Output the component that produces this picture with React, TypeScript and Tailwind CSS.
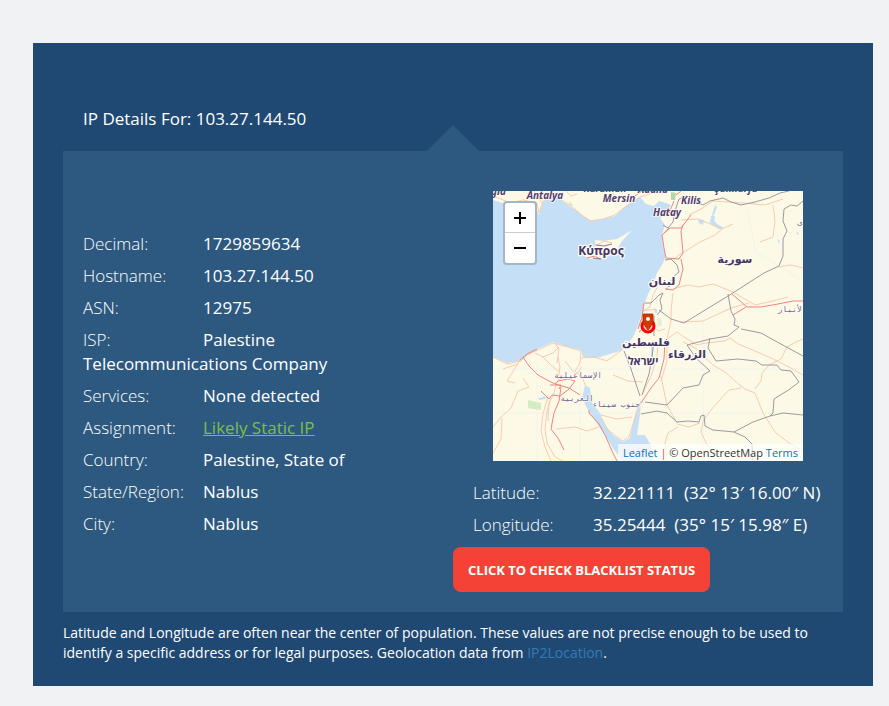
import React from "react";

const details = [
  { label: "Decimal:", value: "1729859634" },
  { label: "Hostname:", value: "103.27.144.50" },
  { label: "ASN:", value: "12975" },
  { label: "ISP:", value: "Palestine Telecommunications Company" },
  { label: "Services:", value: "None detected" },
  { label: "Assignment:", value: "Likely Static IP", href: "#static-ip" },
  { label: "Country:", value: "Palestine, State of" },
  { label: "State/Region:", value: "Nablus" },
  { label: "City:", value: "Nablus" },
];

const coordinates = [
  { label: "Latitude:", value: "32.221111\u00a0 (32° 13′ 16.00″ N)" },
  { label: "Longitude:", value: "35.25444\u00a0 (35° 15′ 15.98″ E)" },
];

const minorRoads = [
  "M0 5L8 8L17 12L30 9L44 12L46 22L50 10L57 7L65 7L77 14L90 25L98 30L110 28L122 24L135 14L147 6L160 2",
  "M73 0L78 5L84 3M118 0L124 8M41 0L45 6L49 12M60 0L56 5",
  "M92 63L100 66L110 60L120 58M104 54L111 50L119 52",
  "M188 29L205 28L215 32L229 38L240 33M229 38L222 44L205 52L196 58L186 64L180 69",
  "M196 24L208 18L220 10L250 12L272 14L290 8M280 14L282 30L280 46L267 51",
  "M180 98L195 94L206 96L220 93L240 101L262 114L280 110L295 106M286 76L298 74L310 77",
  "M188 131L210 130L238 117L256 112M180 102L178 120L178 130L174 148",
  "M147 135L150 120L157 116L160 104L165 95M150 120L163 118M154 130L165 140L172 138",
  "M34 164L47 158L60 152L75 156L88 160L87 172L82 180L90 188L92 194",
  "M34 164L28 170L14 173L0 166M42 162L50 166L58 174L66 181M50 166L60 162L66 156M65 166L67 176L65 190",
  "M25 173L10 178M27 169L14 190L22 192M62 152L66 158L64 172M88 167L102 166L114 170L130 158",
  "M55 205L50 223L48 240L52 256L58 270M58 207L54 220L52 238L54 252L62 266L70 270",
  "M30 187L36 196L25 200L18 217L8 226L0 236M9 227L8 248L0 262",
  "M63 238L82 236L94 240L106 236M72 170L83 184L89 176M120 184L135 190L150 191",
  "M64 191L60 205L56 212L55 230M108 224L124 228L139 226",
  "M109 228L115 239L130 250L136 246L141 230L146 214",
  "M174 148L184 141L191 146L204 154L212 152L232 150L237 147L245 153L262 160L280 168L296 176L310 184",
  "M190 151L204 158L210 165L220 174L232 181L242 190L252 198L262 202L270 222L282 241L296 252L310 260",
  "M248 197L236 199L225 211L218 219L210 230L208 241L214 254L225 265",
  "M262 198L268 190L269 182L276 174L288 168L294 156L303 151L310 148",
  "M185 236L175 242L172 252L174 270M184 233L196 236L207 232M168 185L171 200L174 214",
  "M165 150L164 166L158 185L150 202M174 150L174 170L168 190M174 214L184 232",
];

const mainRoads = [
  "M181 10L176 22M198 24L188 37L177 37L169 44L171 57L173 67L186 68L190 62L188 40L190 34",
  "M188 68L190 78L186 94L180 99L172 98M176 37L171 42",
  "M239 103L246 109L254 116L268 116L285 113L300 110L310 110M253 116L240 124",
  "M27 169L34 163L44 158M30 166L36 175L45 184L54 189L62 193L76 197L87 204",
  "M62 193L65 190L75 188L82 190L76 198L67 205L59 204L56 208L48 200M68 196L66 210L61 222L58 238L65 247L71 259",
  "M57 194L68 194L66 198M96 219L96 222L106 233L113 246L119 260L124 270",
  "M172 150L171 168L166 187L158 197L148 212",
  "M145 138L149 126L151 112M146 141L150 138",
  "M94 67L102 65L107 68M142 5L149 0M188 0L183 4",
];

const borders = [
  "M170 34L175 37L180 31L182 20L186 8L194 5L200 9L210 14L217 10L230 7L238 11L248 14L262 11L276 7L287 2L296 0",
  "M310 10L304 15L298 14L291 18L290 30L294 40L290 48L290 65L286 75L271 82L235 105L191 132L178 128L166 119",
  "M172 69L178 68L184 74L186 81L181 85L178 90L174 98M152 112L158 112L166 104L170 102L167 109L169 118L164 124",
  "M235 103L238 120L242 128L241 134L246 136L235 145L217 148L194 154L203 167L217 180L210 184L206 194L190 197L174 214L152 211",
  "M248 138L268 142L286 152L310 165M217 147L215 157L223 170L245 168L263 170L269 174L284 174L288 179L298 180L306 191L297 198L281 208L280 222L277 225L260 231L241 241L231 240L220 239L212 235L211 224L208 225L206 231L195 230L184 231L174 222L164 220L148 223",
  "M277 225L290 222L310 224M241 241L252 246L259 253L260 270",
  "M131 160L138 178L147 205M149 204L156 183L159 166L161 150M161 125L161 145",
];

const places = [
  { x: 52, y: 8, name: "Antalya" },
  { x: 126, y: 11, name: "Mersin" },
  { x: 174, y: 25, name: "Hatay" },
  { x: 198, y: 13, name: "Kilis" },
  { x: 112, y: 1, name: "Karaman" },
  { x: 160, y: 2, name: "Adana" },
  { x: -2, y: 4, name: "Muğla" },
  { x: 243, y: 1, name: "Şanlıurfa" },
];

const countries = [
  { x: 108, y: 64, name: "Κύπρος", size: 12 },
  { x: 242, y: 72, name: "سورية", size: 11 },
  { x: 169, y: 94, name: "لبنان", size: 11 },
  { x: 153, y: 155, name: "فلسطين", size: 11 },
  { x: 150, y: 174, name: "ישראל", size: 11 },
  { x: 194, y: 167, name: "الزرقاء", size: 11 },
];

const regions = [
  { x: 85, y: 187, name: "الإسماعيلية" },
  { x: 84, y: 210, name: "الغربية" },
  { x: 123, y: 216, name: "جنوب سيناء" },
  { x: 299, y: 121, name: "الأنبار" },
  { x: 309, y: 34, name: "دى" },
];

const MapTile = () => (
  <svg
    className="block h-full w-full"
    viewBox="0 0 310 270"
    preserveAspectRatio="xMidYMid slice"
    role="img"
    aria-label="Map of the IP location"
  >
    <rect width="310" height="270" fill="#fcfae6" />
    <g fill="#c5dff6">
      <path d="M0 9L12 13L42 12L44 20L46 24L50 11L57 7L65 7L72 12L84 20L90 25L98 30L110 28L122 25L130 17L140 10L147 6L153 13L161 15L166 10L173 12L178 14L174 20L167 27L172 34L169 44L170 55L173 65L169 74L164 82L160 94L155 103L151 114L145 135L140 146L130 159L117 163L104 167L90 166L88 159L75 156L60 151L47 157L34 164L27 170L14 172L0 166Z" />
      <path d="M92 194L89 207L94 217L100 227L112 244L120 257L129 270H160L159 256L152 244L144 244L147 224L148 209L144 217L140 232L137 247L130 251L120 244L112 234L107 222L99 212L97 197Z" />
      <path d="M205 28L211 29L210 34L206 32ZM220 24L222 26L221 29L224 33L231 37L226 38L217 32L218 25ZM222 14L224 16L221 24L219 24ZM161 118L164 118L164 122L162 122ZM158 153L160 155L160 170L158 168Z" />
      <path d="M45 207L55 205L52 208L46 209ZM284 48L287 50L286 53ZM303 40L306 43L304 44Z" />
    </g>
    <path
      d="M102 49L110 50L124 48L139 39L129 50L125 57L119 64L107 67L97 68L90 64L95 57L103 55Z"
      fill="#fcfae6"
    />
    <g fill="#d4ecc0">
      <path d="M35 209L48 212L48 219L40 218L35 217Z" />
      <path d="M178 1L183 2L182 9L178 9Z" fill="#b5d6a8" />
      <path d="M76 10L80 14L77 16Z" />
      <path d="M164 128L168 127L169 134L165 136Z" fill="#e4efcf" />
    </g>
    <g fill="none" stroke="#e4edec" strokeWidth="0.5">
      <path d="M44 172V270M87 170V270M0 178H310M0 222H310M210 130V270M255 20L262 60L310 90" />
    </g>
    <g fill="none" stroke="#f5c6a9" strokeWidth="0.9" strokeLinejoin="round">
      {minorRoads.map((d) => (
        <path key={d} d={d} />
      ))}
    </g>
    <g fill="none" stroke="#ee8583" strokeWidth="1" strokeLinejoin="round">
      {mainRoads.map((d) => (
        <path key={d} d={d} />
      ))}
    </g>
    <g fill="none" stroke="#948d99" strokeWidth="0.9" strokeLinejoin="round">
      {borders.map((d) => (
        <path key={d} d={d} />
      ))}
      <path d="M103 54L111 55L119 53M100 67L108 68" stroke="#86677a" />
    </g>

    <g textAnchor="middle" stroke="#fcfcf6" strokeLinejoin="round" className="[paint-order:stroke]">
      <g
        fill="#54406d"
        fontSize="10"
        strokeWidth="1.5"
        className="font-['Noto_Sans','Open_Sans',sans-serif] font-bold italic"
      >
        {places.map((place) => (
          <text key={place.name} x={place.x} y={place.y}>
            {place.name}
          </text>
        ))}
      </g>
      <g
        fill="#46345f"
        strokeWidth="2.5"
        className="font-['Open_Sans','DejaVu_Sans',sans-serif] font-bold"
      >
        {countries.map((country) => (
          <text key={country.name} x={country.x} y={country.y} fontSize={country.size}>
            {country.name}
          </text>
        ))}
      </g>
      <g
        fill="#776587"
        fontSize="8"
        strokeWidth="1.5"
        className="font-['DejaVu_Sans_Mono',monospace]"
      >
        {regions.map((region) => (
          <text key={region.name} x={region.x} y={region.y}>
            {region.name}
          </text>
        ))}
      </g>
    </g>

    {/* marker */}
    <circle cx="155" cy="135" r="6" fill="#ffab9c" fillOpacity="0.8" stroke="#fb0007" strokeWidth="3" />
    <path d="M150 123H160V132L155 139L150 132Z" fill="#d43a00" stroke="#96300a" strokeWidth="0.8" />
    <circle cx="155" cy="128" r="2" fill="#fff" />
  </svg>
);

const LocationMap = () => {
  return (
    <div className="relative mx-10 h-[270px] overflow-hidden">
      <MapTile />
      <div className="absolute left-2.5 top-2.5 flex flex-col overflow-hidden rounded border-2 border-[#a3b5c6] bg-white text-black">
        <button
          type="button"
          aria-label="Zoom in"
          className="flex h-[30px] w-[30px] items-center justify-center border-b border-[#ccc]"
        >
          <svg width="12" height="12" viewBox="0 0 12 12" aria-hidden="true">
            <path d="M0 6H12M6 0V12" stroke="currentColor" strokeWidth="2" />
          </svg>
        </button>
        <button
          type="button"
          aria-label="Zoom out"
          className="flex h-[30px] w-[30px] items-center justify-center"
        >
          <svg width="12" height="12" viewBox="0 0 12 12" aria-hidden="true">
            <path d="M0 6H12" stroke="currentColor" strokeWidth="2" />
          </svg>
        </button>
      </div>
      <div className="absolute bottom-0 right-0 whitespace-nowrap bg-white/70 px-[5px] text-[11px] leading-[17px] text-[#333]">
        <a href="#leaflet" className="text-[#0078a8]">
          Leaflet
        </a>{" "}
        <span className="text-[#b5533c]">|</span> © OpenStreetMap{" "}
        <a href="#terms" className="text-[#0078a8]">
          Terms
        </a>
      </div>
    </div>
  );
};

const App = () => {
  return (
    <div className="min-h-screen bg-[#f1f2f4] pb-5 pl-[33px] pr-4 pt-[43px] font-['Open_Sans','Noto_Sans',sans-serif] text-white">
      <main className="bg-[#1f4972] px-[30px] pb-[23px] pt-16">
        <h1 className="pl-5 text-[17px] leading-6">IP Details For: 103.27.144.50</h1>
        <div className="mt-[-6px] flex justify-center">
          <svg width="52" height="26" viewBox="0 0 52 26" aria-hidden="true">
            <path d="M0 26L26 0L52 26Z" fill="#2d5980" />
          </svg>
        </div>

        <section className="grid grid-cols-2 bg-[#2d5980] pb-5 pt-10 text-[17px] leading-6">
          <div className="mt-[41px] flex flex-col gap-2 px-5">
            {details.map((item) => (
              <p key={item.label}>
                <span className="inline-block w-[120px] font-light">{item.label}</span>
                {item.href ? (
                  <a href={item.href} className="text-[#7ac143] underline">
                    {item.value}
                  </a>
                ) : (
                  <span className="font-medium">{item.value}</span>
                )}
              </p>
            ))}
          </div>

          <div>
            <LocationMap />
            <div className="mt-5 flex flex-col gap-2 pl-5">
              {coordinates.map((item) => (
                <p key={item.label} className="whitespace-nowrap">
                  <span className="inline-block w-[120px] font-light">{item.label}</span>
                  <span>{item.value}</span>
                </p>
              ))}
            </div>
            <button
              type="button"
              className="mt-[10px] rounded-lg bg-[#f44336] px-[15px] pb-[11px] pt-[13px] text-[13px] font-bold leading-[21px] text-white"
            >
              CLICK TO CHECK BLACKLIST STATUS
            </button>
          </div>
        </section>

        <p className="mt-[11px] text-sm leading-5">
          Latitude and Longitude are often near the center of population. These values are not
          precise enough to be used to identify a specific address or for legal purposes.
          Geolocation data from{" "}
          <a href="#ip2location" className="text-[#337ab7]">
            IP2Location
          </a>
          .
        </p>
      </main>
    </div>
  );
};

export default App;
